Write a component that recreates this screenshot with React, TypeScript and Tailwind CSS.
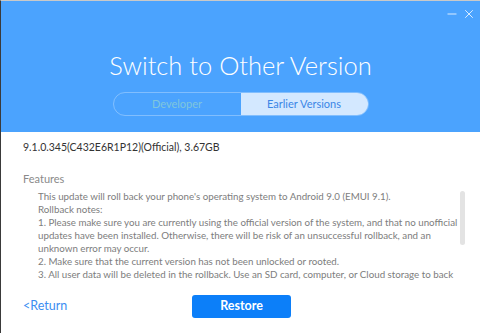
// Switch to Other Version — rollback dialog
import { X, Minus } from 'lucide-react'

const NOTES = [
  "This update will roll back your phone's operating system to Android 9.0 (EMUI 9.1).",
  'Rollback notes:',
  '1. Please make sure you are currently using the official version of the system, and that no unofficial',
  'updates have been installed. Otherwise, there will be risk of an unsuccessful rollback, and an',
  'unknown error may occur.',
  '2. Make sure that the current version has not been unlocked or rooted.',
  '3. All user data will be deleted in the rollback. Use an SD card, computer, or Cloud storage to back',
]

export default function App() {
  return (
    <div className="w-[480px] h-[333px] overflow-hidden border-t border-t-[#c9c9c9] border-l border-l-[#3a3a3a] bg-white font-['Lato',sans-serif]">
      {/* Header */}
      <header className="relative h-[131px] bg-[#4ba3fe] flex flex-col items-center">
        <div className="absolute top-[6px] right-[4px] flex items-center gap-[3px] text-white/90">
          <Minus size={14} strokeWidth={1.5} />
          <X size={14} strokeWidth={1.5} />
        </div>
        <h1 className="mt-[48px] text-[25.5px] leading-[32px] font-light text-white">
          Switch to Other Version
        </h1>
        <div className="mt-[11px] flex h-[24px] w-[256px] rounded-full overflow-hidden border border-white/30 text-[11px]">
          <button className="flex-1 flex items-center justify-center text-[#7fc6dc]">Developer</button>
          <button className="flex-1 flex items-center justify-center bg-[#d3e8ff] text-[#3a86e6]">
            Earlier Versions
          </button>
        </div>
      </header>

      {/* Body */}
      <main className="pl-[22px] pr-[15px]">
        <p className="mt-[7px] text-[10.5px] leading-[16px] text-[#333]">
          9.1.0.345(C432E6R1P12)(Official), 3.67GB
        </p>
        <p className="mt-[16px] text-[11px] leading-[16px] text-[#8a8a8a]">Features</p>
        <div className="mt-[3px] flex h-[91px] overflow-hidden">
          <div className="flex-1 pl-[15px] text-[9.75px] leading-[13px] text-[#7d7d7d]">
            {NOTES.map((line) => (
              <div key={line} className="whitespace-nowrap">{line}</div>
            ))}
          </div>
          <div className="mt-[1px] w-[5px] h-[54px] rounded-full bg-[#e3e3e3]" />
        </div>
      </main>

      {/* Footer */}
      <footer className="flex items-center pl-[22px] mt-[14px]">
        <a className="w-[169px] text-[12.5px] text-[#3b8df2]">&lt;Return</a>
        <button className="w-[99px] h-[23px] rounded-[3px] bg-[#0c7ff9] text-white text-[12.5px] font-bold">
          Restore
        </button>
      </footer>
    </div>
  )
}
